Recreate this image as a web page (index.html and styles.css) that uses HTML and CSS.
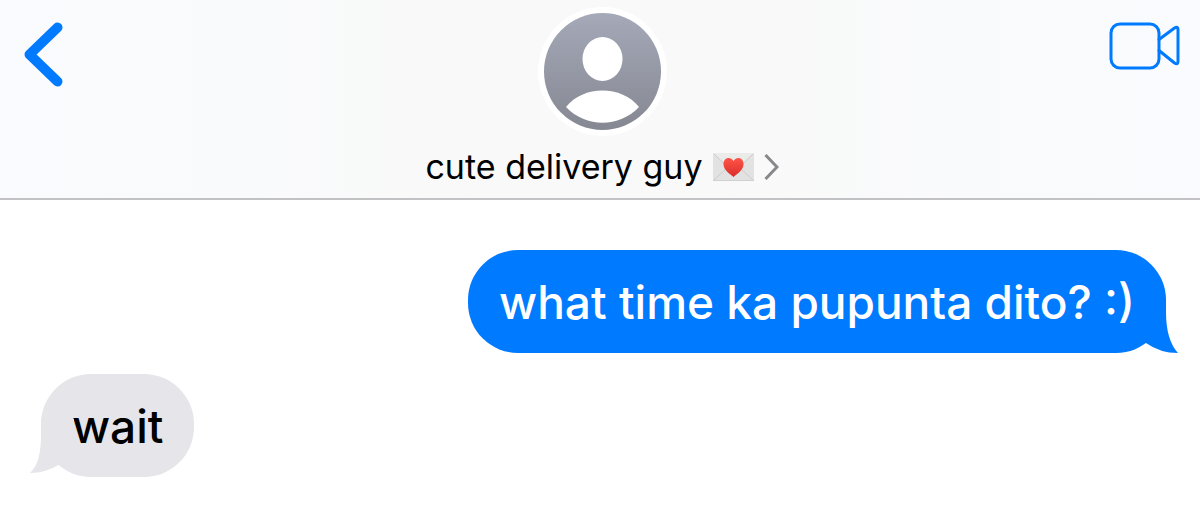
FILE: index.html
```html
<!DOCTYPE html>
<html lang="tl">
  <head>
    <meta charset="utf-8">
    <meta name="viewport" content="width=device-width, initial-scale=1">
    <title>Messages</title>
    <link rel="stylesheet" href="styles.css">
  </head>
  <body>
    <header class="header">
      <button class="icon-btn back-btn" type="button" aria-label="Back">
        <svg width="39" height="65" viewBox="0 0 39 65">
          <path d="M33.5 5.5 L5.500 32.5 L33.5 59.5" />
        </svg>
      </button>

      <a class="contact" href="#">
        <svg class="avatar" width="129" height="129" viewBox="0 0 129 129">
          <defs>
            <linearGradient id="avatar-fill" x1="0" y1="0" x2="0" y2="1">
              <stop offset="0" stop-color="#a5a9b8" />
              <stop offset="1" stop-color="#858892" />
            </linearGradient>
          </defs>
          <circle cx="64.5" cy="64.5" r="64.5" fill="#fff" />
          <circle cx="64.5" cy="64.5" r="58.5" fill="url(#avatar-fill)" />
          <ellipse cx="64.5" cy="52" rx="20" ry="22" fill="#fff" />
          <path d="M28 100 C45 78 84 78 101 100 C81 121 48 121 28 100 Z" fill="#fff" />
        </svg>
        <span class="contact-name">
          <span>cute delivery guy</span>
          <svg width="41" height="28" viewBox="0 0 41 28">
            <defs>
              <linearGradient id="heart-fill" x1="0" y1="0" x2="0" y2="1">
                <stop offset="0" stop-color="#ff5548" />
                <stop offset="1" stop-color="#d92c2a" />
              </linearGradient>
            </defs>
            <rect width="41" height="28" fill="#e1e2e1" />
            <path d="M0 0 H41 L23 17 Q20.5 19 18 17 Z" fill="#ebecea" />
            <path d="M1 27 L15 14 M40 27 L26 14 M1 1 L18 17 Q20.5 19 23 17 L40 1" fill="none" stroke="#cbcccb" />
            <path d="M0 27.5 H41" stroke="#cfd0cf" />
            <path d="M20.5 24 C17 21 10.5 17 10.5 11 C10.5 4.500 17.5 3 20.5 8 C23.5 3 30.5 4.500 30.5 11 C30.5 17 24 21 20.5 24 Z" fill="url(#heart-fill)" />
          </svg>
          <svg class="chevron" width="15" height="26" viewBox="0 0 15 26">
            <path d="M1.5 1 L13 13 L1.5 25" />
          </svg>
        </span>
      </a>

      <button class="icon-btn video-btn" type="button" aria-label="Video call">
        <svg width="71" height="48" viewBox="0 0 71 48">
          <rect x="2" y="2" width="48" height="44" rx="9" />
          <path d="M50 17.5 L65.5 6 Q69 4 69 7.500 V39.5 Q69 43 65.5 41 L50 28.5" />
        </svg>
      </button>
    </header>

    <main class="messages">
      <p class="bubble sent">
        what time ka pupunta dito? :)
        <svg class="tail" width="44" height="55" viewBox="0 0 44 55">
          <path d="M0 0 H32 V14 Q32 42 44 55 Q26 55 12 45 L0 30 Z" />
        </svg>
      </p>
      <p class="bubble received">
        wait
        <svg class="tail" width="44" height="55" viewBox="0 0 44 55">
          <path d="M44 0 H11 V17 Q11 44 0 54 Q16 54 30 45 L44 30 Z" />
        </svg>
      </p>
    </main>
  </body>
</html>
```
FILE: styles.css
```css
* {
  box-sizing: border-box;
}

body {
  margin: 0;
  background-color: #fff;
  color: #000;
  font-family: Inter, "Liberation Sans", sans-serif;
}

/* header */
.header {
  display: grid;
  grid-template-columns: 1fr auto 1fr;
  align-items: start;
  padding: 7px 20px 8px 24px;
  border-bottom: 2px solid #c2c2c4;
  background: linear-gradient(to right, #fafbfe, #f9f9f9 40%, #f9f9f9 60%, #fafbfe);
}

.icon-btn {
  margin-top: 15px;
  padding: 0;
  border: none;
  background: none;
  cursor: pointer;
}

.icon-btn svg {
  display: block;
  fill: none;
  stroke: #007aff;
  stroke-linecap: round;
  stroke-linejoin: round;
}

.back-btn {
  justify-self: start;
  stroke-width: 10px;
}

.video-btn {
  justify-self: end;
  stroke-width: 3px;
}

.contact {
  display: flex;
  flex-direction: column;
  align-items: center;
  gap: 8px;
  color: inherit;
  text-decoration: none;
}

.contact-name {
  display: flex;
  align-items: center;
  gap: 10px;
  font-size: 34px;
  line-height: 46px;
}

.chevron {
  fill: none;
  stroke: #88888c;
  stroke-width: 3px;
}

/* messages */
.messages {
  display: flex;
  flex-direction: column;
  gap: 21px;
  padding: 50px 34px 40px 41px;
}

.bubble {
  position: relative;
  margin: 0;
  padding: 22px 31px 21px;
  border-radius: 50px;
  font-size: 46px;
  font-weight: 500;
  line-height: 60px;
}

.sent {
  align-self: flex-end;
  background-color: #007aff;
  color: #fff;
}

.received {
  align-self: flex-start;
  background-color: #e5e5ea;
}

.tail {
  position: absolute;
  bottom: 0;
}

.sent .tail {
  right: -12px;
  fill: #007aff;
}

.received .tail {
  bottom: 3px;
  left: -11px;
  fill: #e5e5ea;
}
```
